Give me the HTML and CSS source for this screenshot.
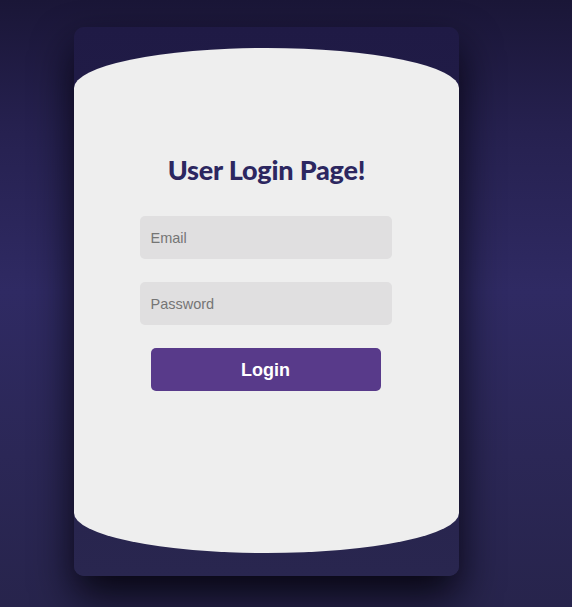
FILE: index.html
```html
<!DOCTYPE html>
<html lang="en">
<head>
<meta charset="utf-8">
<title>User Login</title>
<link rel="stylesheet" href="styles.css">
</head>
<body>
  <div class="card">
    <div class="panel">
      <h1 class="title">User Login Page!</h1>
      <form class="form">
        <input class="field" type="email" placeholder="Email">
        <input class="field" type="password" placeholder="Password">
        <button class="btn" type="button">Login</button>
      </form>
    </div>
  </div>
</body>
</html>
```

FILE: styles.css
```css
html, body {
  margin: 0;
  padding: 0;
}
body {
  min-height: 607px;
  background: linear-gradient(180deg, #1a1637 0%, #262150 22%, #2f2a63 48%, #2b2756 75%, #27244c 100%);
  font-family: "Liberation Sans", Arial, sans-serif;
  padding: 27px 0 0 74px;
  box-sizing: border-box;
  overflow: hidden;
}
.card {
  width: 385px;
  box-sizing: border-box;
  padding: 21px 0 23px;
  border-radius: 10px;
  background: linear-gradient(180deg, #1f1a45 0%, #24204b 50%, #29264f 100%);
  box-shadow: 0 20px 40px rgba(3, 2, 10, 0.88);
}
.panel {
  height: 505px;
  background: #eeeeee;
  border-radius: 50% / 40px;
  display: flex;
  flex-direction: column;
  align-items: center;
  padding-top: 105px;
  box-sizing: border-box;
}
.title {
  margin: 0;
  font-family: Lato, "Noto Sans", sans-serif;
  font-weight: 900;
  font-size: 27px;
  line-height: 34px;
  color: #2c2760;
  letter-spacing: -0.2px;
}
.form {
  display: flex;
  flex-direction: column;
  align-items: center;
  gap: 23px;
  margin: 29px 2px 0 0;
}
.field {
  width: 252px;
  height: 43px;
  box-sizing: border-box;
  border: none;
  border-radius: 5px;
  background: #e0dfe0;
  padding: 0 11px;
  font-family: "Liberation Sans", Arial, sans-serif;
  font-size: 14.5px;
  color: #333;
  outline: none;
}
.field::placeholder {
  color: #757575;
}
.btn {
  width: 230px;
  height: 43px;
  border: none;
  border-radius: 5px;
  background: #583a8a;
  color: #ffffff;
  font-family: "Liberation Sans", Arial, sans-serif;
  font-weight: bold;
  font-size: 18px;
  padding-top: 2px;
  cursor: pointer;
}
```
